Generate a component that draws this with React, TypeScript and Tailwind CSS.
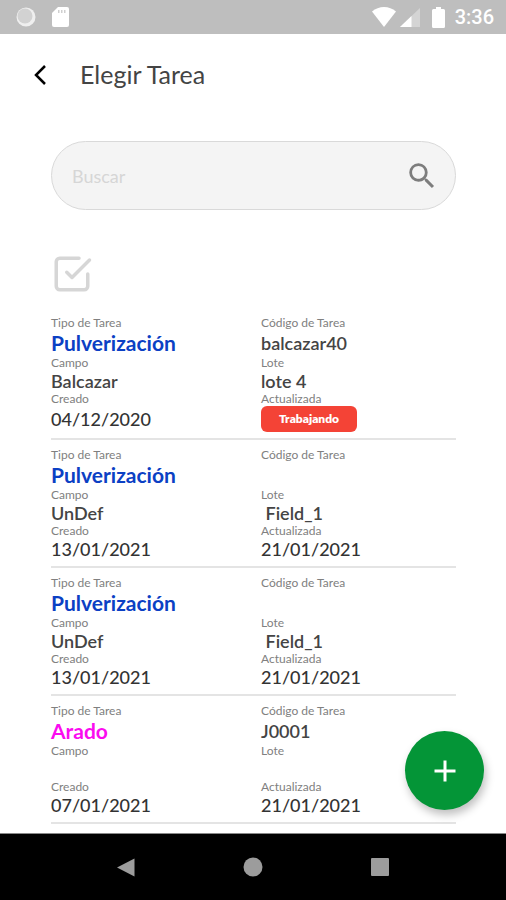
import React from 'react';
import { FiCheckSquare } from 'react-icons/fi';
import { MdSearch, MdAdd } from 'react-icons/md';

type Task = {
  id: number;
  type: string;
  typeColor: string;
  code: string;
  field: string;
  lot: string;
  created: string;
  updated: string;
  working?: boolean;
};

// Mock tasks
const tasks: Task[] = [
  { id: 1, type: 'Pulverización', typeColor: 'text-[#0b40c4]', code: 'balcazar40', field: 'Balcazar', lot: 'lote 4', created: '04/12/2020', updated: '', working: true },
  { id: 2, type: 'Pulverización', typeColor: 'text-[#0b40c4]', code: '', field: 'UnDef', lot: ' Field_1', created: '13/01/2021', updated: '21/01/2021' },
  { id: 3, type: 'Pulverización', typeColor: 'text-[#0b40c4]', code: '', field: 'UnDef', lot: ' Field_1', created: '13/01/2021', updated: '21/01/2021' },
  { id: 4, type: 'Arado', typeColor: 'text-[#fb0bf0]', code: 'J0001', field: '', lot: '', created: '07/01/2021', updated: '21/01/2021' },
];

function StatusBar() {
  return (
    <div className="flex h-[34px] shrink-0 items-center justify-between bg-[#bebebe] pr-3 pl-4 text-white">
      <div className="flex items-center gap-4">
        <svg className="h-5 w-5" viewBox="0 0 20 20">
          <circle cx="10" cy="10" r="9.5" fill="#fff" fillOpacity="0.75" />
          <circle cx="9" cy="9" r="7.5" fill="#d2d2d2" />
        </svg>
        <svg className="h-5 w-[17px]" viewBox="0 0 17 20" fill="#fff">
          <path d="M6 0h9a2 2 0 0 1 2 2v16a2 2 0 0 1-2 2H2a2 2 0 0 1-2-2V6z" />
          <path d="M6 3h1.500v3H6zM9 3h1.500v3H9zM12 3h1.500v3H12z" fill="#cfcfcf" />
        </svg>
      </div>
      <div className="flex items-center">
        <svg className="h-5 w-6" viewBox="0 0 24 20" fill="#fff">
          <path d="M12 20 0 4.500C3.500 1.700 7.500 0 12 0s8.500 1.700 12 4.500z" />
        </svg>
        <svg className="ml-1 h-[19px] w-5" viewBox="0 0 20 19">
          <path d="M20 0v19H0z" fill="#fff" fillOpacity="0.35" />
          <path d="M11.500 8v11H0z" fill="#fff" />
        </svg>
        <svg className="ml-3 h-[21px] w-[13px]" viewBox="0 0 13 21" fill="#fff">
          <path d="M4 0h5v2h2.500A1.500 1.500 0 0 1 13 3.500v16a1.500 1.500 0 0 1-1.500 1.500h-10A1.500 1.500 0 0 1 0 19.500v-16A1.500 1.500 0 0 1 1.500 2H4z" />
        </svg>
        <span className="ml-2.5 font-['Roboto',sans-serif] text-xl leading-6 font-medium">3:36</span>
      </div>
    </div>
  );
}

function Field({ label, children, className }: { label: string; children?: React.ReactNode; className: string }) {
  return (
    <div>
      <dt className="text-xs leading-[14px] text-[#808080]">{label}</dt>
      <dd className={`flex items-center whitespace-pre ${className}`}>{children}</dd>
    </div>
  );
}

const nameClass = 'h-[22px] text-lg font-semibold text-[#444]';
const dateClass = 'h-[22px] text-lg font-medium text-[#333]';

export default function App() {
  return (
    <div className="flex h-screen flex-col bg-white font-['Lato',sans-serif]">
      <StatusBar />

      <div className="relative min-h-0 flex-1">
        <div className="h-full overflow-y-auto">
          {/* Header */}
          <header className="flex h-[82px] items-center pl-8">
            <button aria-label="Volver" className="flex h-8 w-4 items-center justify-center text-black">
              <svg className="h-5 w-3" viewBox="0 0 12 20" fill="none" stroke="currentColor" strokeWidth="2.500">
                <path d="M11 1 2 10l9 9" />
              </svg>
            </button>
            <h1 className="ml-8 text-[25px] text-[#444]">Elegir Tarea</h1>
          </header>

          <main className="pt-[25px] pr-[50px] pl-[51px]">
            {/* Search */}
            <div className="flex h-[69px] items-center rounded-full border border-[#d9d9d9] bg-[#f4f4f4] pr-4 pl-5">
              <input
                type="text"
                aria-label="Buscar"
                placeholder="Buscar"
                className="min-w-0 flex-1 bg-transparent text-lg text-[#333] outline-none placeholder:text-[#d6d6d6]"
              />
              <button aria-label="Iniciar búsqueda" className="text-[#7d7d7d]">
                <MdSearch className="h-[34px] w-[34px]" />
              </button>
            </div>

            <button aria-label="Seleccionar tareas" className="mt-[43px] block text-[#d6d6d6]">
              <FiCheckSquare className="h-[42px] w-[42px]" />
            </button>

            {/* Task list */}
            <ul className="mt-[13px]">
              {tasks.map((task) => (
                <li key={task.id} className="border-b-2 border-[#e4e4e4] pt-2 pb-1.5">
                  <dl className="grid grid-cols-[14fr_13fr]">
                    <Field label="Tipo de Tarea" className={`h-[26px] text-[21px] font-bold ${task.typeColor}`}>{task.type}</Field>
                    <Field label="Código de Tarea" className="h-[26px] text-lg font-semibold text-[#444]">{task.code}</Field>
                    <Field label="Campo" className={nameClass}>{task.field}</Field>
                    <Field label="Lote" className={nameClass}>{task.lot}</Field>
                    <Field label="Creado" className={task.working ? 'h-[26px] text-lg font-medium text-[#333]' : dateClass}>{task.created}</Field>
                    {task.working ? (
                      <Field label="Actualizada" className="h-[26px]">
                        <span className="flex h-full w-24 items-center justify-center rounded-md bg-[#f44336] text-xs font-extrabold text-white">
                          Trabajando
                        </span>
                      </Field>
                    ) : (
                      <Field label="Actualizada" className={dateClass}>{task.updated}</Field>
                    )}
                  </dl>
                </li>
              ))}
            </ul>
          </main>
        </div>

        <button
          aria-label="Agregar tarea"
          className="absolute right-[22px] bottom-[23px] flex h-[79px] w-[79px] items-center justify-center rounded-full bg-[#049537] text-white shadow-[2px_5px_8px_rgba(0,0,0,0.25)]"
        >
          <MdAdd className="h-9 w-9" />
        </button>
      </div>

      {/* Android navigation */}
      <nav className="flex h-[67px] shrink-0 items-center justify-center gap-[108px] border-t border-[#888] bg-black text-[#9c9c9c]">
        <button aria-label="Atrás">
          <svg className="h-[19px] w-[18px]" viewBox="0 0 18 19" fill="currentColor"><path d="M17.500.5v18L0 9.500z" /></svg>
        </button>
        <button aria-label="Inicio">
          <svg className="h-5 w-5" viewBox="0 0 20 20" fill="currentColor"><circle cx="10" cy="10" r="9.500" /></svg>
        </button>
        <button aria-label="Recientes">
          <svg className="h-[18px] w-[18px]" viewBox="0 0 18 18" fill="currentColor"><rect width="18" height="18" rx="1" /></svg>
        </button>
      </nav>
    </div>
  );
}
